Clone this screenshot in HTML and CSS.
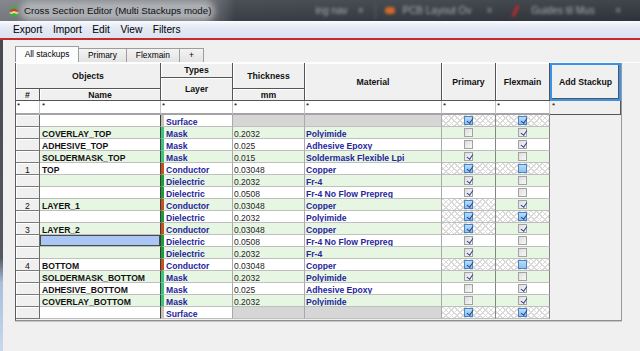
FILE: index.html
```html
<!doctype html>
<html lang="en">
<head>
<meta charset="utf-8">
<title>Cross Section Editor</title>
<link rel="stylesheet" href="styles.css">
</head>
<body>
<div class="titlebar">
  <svg class="app-icon" width="12" height="12" viewBox="0 0 12 12">
    <path d="M1 3 L6 1 L11 3 L6 5 Z" fill="#3cae3c"/>
    <path d="M1 5.5 L6 3.5 L11 5.5 L6 7.5 Z" fill="#d33a2c"/>
    <path d="M1 8 L6 6 L11 8 L6 10 Z" fill="#ecd9a0"/>
    <path d="M1 10 L6 8 L11 10 L6 12 Z" fill="#3cae3c"/>
  </svg>
  <span class="title">Cross Section Editor (Multi Stackups mode)</span>
  <div class="ghosts">
    <span class="ghost t1">ing nav</span>
    <span class="ghost x">×</span>
    <span class="ghost sep"></span>
    <span class="ghost dot"></span>
    <span class="ghost t2">PCB Layout Ov</span>
    <span class="ghost x">×</span>
    <span class="ghost slash"></span>
    <span class="ghost t3">Guides til Mus</span>
    <span class="ghost x">×</span>
  </div>
</div>

<div class="menubar">
  <span>Export</span>
  <span>Import</span>
  <span>Edit</span>
  <span>View</span>
  <span>Filters</span>
</div>

<div class="main">
  <div class="frame"></div>
  <div class="content">
    <div class="tabs">
      <span class="tab active">All stackups</span>
      <span class="tab">Primary</span>
      <span class="tab">Flexmain</span>
      <span class="tab plus">+</span>
    </div>
    <div class="panel">
      <div class="grid">
        <div class="head">
          <div class="h objects">Objects</div>
          <div class="h types">Types</div>
          <div class="h layer">Layer</div>
          <div class="h thick-h">Thickness</div>
          <div class="h mm">mm</div>
          <div class="h material">Material</div>
          <div class="h primary">Primary</div>
          <div class="h flexmain">Flexmain</div>
          <div class="h add">Add Stackup</div>
          <div class="h hash">#</div>
          <div class="h name-h">Name</div>
        </div>
        <div class="filter">
          <span>*</span><span>*</span><span>*</span><span>*</span><span>*</span><span>*</span><span>*</span><span class="addf">*</span>
        </div>

        <div class="row">
          <div class="c num"></div><div class="c name"></div><div class="c type surf">Surface</div>
          <div class="c thick grey"></div><div class="c mat grey"></div>
          <div class="c chk lock"><i class="cb blue on"></i></div><div class="c chk lock"><i class="cb blue on"></i></div>
        </div>
        <div class="row g">
          <div class="c num"></div><div class="c name">COVERLAY_TOP</div><div class="c type mask">Mask</div>
          <div class="c thick">0.2032</div><div class="c mat">Polyimide</div>
          <div class="c chk"><i class="cb"></i></div><div class="c chk"><i class="cb on"></i></div>
        </div>
        <div class="row">
          <div class="c num"></div><div class="c name">ADHESIVE_TOP</div><div class="c type mask">Mask</div>
          <div class="c thick">0.025</div><div class="c mat">Adhesive Epoxy</div>
          <div class="c chk"><i class="cb"></i></div><div class="c chk"><i class="cb on"></i></div>
        </div>
        <div class="row g">
          <div class="c num"></div><div class="c name">SOLDERMASK_TOP</div><div class="c type mask">Mask</div>
          <div class="c thick">0.015</div><div class="c mat">Soldermask Flexible Lpi</div>
          <div class="c chk"><i class="cb on"></i></div><div class="c chk"><i class="cb"></i></div>
        </div>
        <div class="row">
          <div class="c num">1</div><div class="c name">TOP</div><div class="c type cond">Conductor</div>
          <div class="c thick">0.03048</div><div class="c mat">Copper</div>
          <div class="c chk lock"><i class="cb blue on"></i></div><div class="c chk lock"><i class="cb blue"></i></div>
        </div>
        <div class="row g">
          <div class="c num"></div><div class="c name"></div><div class="c type diel">Dielectric</div>
          <div class="c thick">0.2032</div><div class="c mat">Fr-4</div>
          <div class="c chk"><i class="cb on"></i></div><div class="c chk"><i class="cb"></i></div>
        </div>
        <div class="row">
          <div class="c num"></div><div class="c name"></div><div class="c type diel">Dielectric</div>
          <div class="c thick">0.0508</div><div class="c mat">Fr-4 No Flow Prepreg</div>
          <div class="c chk"><i class="cb on"></i></div><div class="c chk"><i class="cb"></i></div>
        </div>
        <div class="row g">
          <div class="c num">2</div><div class="c name">LAYER_1</div><div class="c type cond">Conductor</div>
          <div class="c thick">0.03048</div><div class="c mat">Copper</div>
          <div class="c chk lock"><i class="cb blue on"></i></div><div class="c chk"><i class="cb on"></i></div>
        </div>
        <div class="row">
          <div class="c num"></div><div class="c name"></div><div class="c type diel">Dielectric</div>
          <div class="c thick">0.2032</div><div class="c mat">Polyimide</div>
          <div class="c chk lock"><i class="cb blue on"></i></div><div class="c chk lock"><i class="cb blue on"></i></div>
        </div>
        <div class="row g">
          <div class="c num">3</div><div class="c name">LAYER_2</div><div class="c type cond">Conductor</div>
          <div class="c thick">0.03048</div><div class="c mat">Copper</div>
          <div class="c chk lock"><i class="cb blue on"></i></div><div class="c chk"><i class="cb on"></i></div>
        </div>
        <div class="row">
          <div class="c num"></div><div class="c name sel"></div><div class="c type diel">Dielectric</div>
          <div class="c thick">0.0508</div><div class="c mat">Fr-4 No Flow Prepreg</div>
          <div class="c chk"><i class="cb on"></i></div><div class="c chk"><i class="cb"></i></div>
        </div>
        <div class="row g">
          <div class="c num"></div><div class="c name"></div><div class="c type diel">Dielectric</div>
          <div class="c thick">0.2032</div><div class="c mat">Fr-4</div>
          <div class="c chk"><i class="cb on"></i></div><div class="c chk"><i class="cb"></i></div>
        </div>
        <div class="row">
          <div class="c num">4</div><div class="c name">BOTTOM</div><div class="c type cond">Conductor</div>
          <div class="c thick">0.03048</div><div class="c mat">Copper</div>
          <div class="c chk lock"><i class="cb blue on"></i></div><div class="c chk lock"><i class="cb blue"></i></div>
        </div>
        <div class="row g">
          <div class="c num"></div><div class="c name">SOLDERMASK_BOTTOM</div><div class="c type mask">Mask</div>
          <div class="c thick">0.2032</div><div class="c mat">Polyimide</div>
          <div class="c chk"><i class="cb on"></i></div><div class="c chk"><i class="cb"></i></div>
        </div>
        <div class="row">
          <div class="c num"></div><div class="c name">ADHESIVE_BOTTOM</div><div class="c type mask">Mask</div>
          <div class="c thick">0.025</div><div class="c mat">Adhesive Epoxy</div>
          <div class="c chk"><i class="cb"></i></div><div class="c chk"><i class="cb on"></i></div>
        </div>
        <div class="row g">
          <div class="c num"></div><div class="c name">COVERLAY_BOTTOM</div><div class="c type mask">Mask</div>
          <div class="c thick">0.2032</div><div class="c mat">Polyimide</div>
          <div class="c chk"><i class="cb"></i></div><div class="c chk"><i class="cb on"></i></div>
        </div>
        <div class="row">
          <div class="c num"></div><div class="c name"></div><div class="c type surf">Surface</div>
          <div class="c thick grey"></div><div class="c mat grey"></div>
          <div class="c chk lock"><i class="cb blue on"></i></div><div class="c chk lock"><i class="cb blue on"></i></div>
        </div>
      </div>
    </div>
  </div>
</div>
</body>
</html>
```

FILE: styles.css
```css
* {
  box-sizing: border-box;
  margin: 0;
  padding: 0;
}
html, body { height: 100%; }
body {
  background: #f0f0f0;
  color: #000;
  font-family: "Liberation Sans", Arial, sans-serif;
  overflow: hidden;
  --cols: 24px 121px 72px 72px 137px 54px 54px 71px;
}

/* window title (aero glass) */
.titlebar {
  height: 21px;
  display: flex;
  align-items: center;
  overflow: hidden;
  white-space: nowrap;
  background:
    linear-gradient(rgba(255,255,255,.08), rgba(0,0,0,.05)),
    linear-gradient(to right, #7a7e84 0, #73777d 205px, #3c4148 235px, #30353c 100%);
}
.app-icon { margin-left: 8px; flex: none; }
.title {
  margin-left: 4px;
  font-size: 9.7px;
  line-height: 12px;
  color: #111;
  background: rgba(205,207,210,.6);
  box-shadow: 0 0 6px 4px rgba(205,207,210,.6);
  border-radius: 6px;
}
.ghosts { display: flex; align-items: center; margin-left: 104px; }
.ghost {
  color: #a6abb2;
  font-size: 10px;
  filter: blur(1.4px);
}
.ghost.x { margin-left: 10px; }
.ghost.sep { width: 1px; height: 16px; background: #5a5f66; margin-left: 12px; }
.ghost.dot { width: 10px; height: 7px; background: #d26a2a; border-radius: 3px; margin-left: 9px; }
.ghost.t2 { margin-left: 7px; width: 74px; }
.ghost.slash { width: 3px; height: 12px; background: #c02a2a; transform: rotate(25deg); margin-left: 22px; }
.ghost.t3 { margin-left: 14px; width: 74px; }

/* menu */
.menubar {
  height: 19px;
  display: flex;
  align-items: center;
  gap: 10.5px;
  padding-left: 13px;
  font-size: 10.2px;
  background: linear-gradient(#fbfcfe 0, #eef1f9 3px, #e4e9f5 7px, #dbe2f1 100%);
  border-bottom: 2px solid #c42a30;
}

.main { display: flex; height: calc(100% - 40px); }
.frame {
  width: 3px;
  flex: none;
  background: linear-gradient(#46494e 0, #55595f 70%, #a9bedb 78%, #c8d8ee 100%);
}
.content { flex: 1; padding: 6px 0 0 12px; }

/* tabs */
.tabs { display: flex; align-items: flex-end; height: 16px; }
.tab {
  height: 14px;
  padding: 0 9px;
  font-size: 8.4px;
  line-height: 13px;
  text-align: center;
  border: 1px solid #9b9d9f;
  border-bottom: none;
  border-left: none;
  background: linear-gradient(#f3f3f3, #e3e3e3);
}
.tab.active {
  height: 16px;
  width: 64px;
  padding: 0;
  line-height: 15px;
  border-left: 1px solid #8e8f8f;
  background: #fcfcfc;
}
.tab.plus { width: 24px; padding: 0; }
.panel { border-top: 1px solid #fdfdfd; }

/* grid */
.grid {
  width: 607px;
  height: 258px;
  background: #f0f0f0;
  border-left: 1px solid #5c5c5c;
  border-right: 1px solid #9a9a9a;
  border-bottom: 1px solid #8e8e8e;
  box-shadow: 0 1px #c8c8c8;
}
.head {
  display: grid;
  grid-template-columns: var(--cols);
  grid-template-rows: 15px 11px 12px;
}
.h {
  display: flex;
  align-items: center;
  justify-content: center;
  background: #f0f0f0;
  border-right: 1px solid #555;
  border-bottom: 1px solid #555;
  box-shadow: inset 1px 1px #fff;
  font-size: 8.7px;
  font-weight: bold;
  color: #111;
}
.objects { grid-column: 1 / 3; grid-row: 1 / 3; }
.types { grid-column: 3; grid-row: 1; }
.layer { grid-column: 3; grid-row: 2 / 4; }
.thick-h { grid-column: 4; grid-row: 1 / 3; }
.mm { grid-column: 4; grid-row: 3; }
.material { grid-column: 5; grid-row: 1 / 4; }
.primary { grid-column: 6; grid-row: 1 / 4; }
.flexmain { grid-column: 7; grid-row: 1 / 4; }
.add { grid-column: 8; grid-row: 1 / 4; border: 2px solid #3a93ea; box-shadow: inset -1px -1px #555; }
.hash { grid-column: 1; grid-row: 3; }
.name-h { grid-column: 2; grid-row: 3; }

.filter {
  display: grid;
  grid-template-columns: var(--cols);
  height: 14px;
}
.filter span {
  background: #fff;
  border-right: 1px solid #c2c2c2;
  border-bottom: 2px solid #a4a4a4;
  font-size: 8px;
  line-height: 9px;
  padding-left: 1px;
}
.filter span:nth-child(2) { padding-left: 2px; }
.filter .addf {
  background: #efefef;
  border-right: 1px solid #555;
  border-bottom: 1px solid #555;
  padding-left: 2px;
}

.row {
  display: grid;
  grid-template-columns: 24px 121px 72px 72px 137px 54px 54px;
  height: 12px;
}
.c {
  background-color: #fff;
  border-right: 1px solid #a9a9a9;
  border-bottom: 1px solid #bfbfbf;
  padding: 2px 0 0 1px;
  font-size: 8.6px;
  font-weight: bold;
  line-height: 10px;
  color: #25259a;
  white-space: nowrap;
  overflow: hidden;
}
.g .c { background-color: #e7f6e3; }
.row .num {
  background-color: #f0f0f0;
  border-right-color: #6b6b6b;
  border-bottom-color: #7a7a7a;
  box-shadow: inset 1px 1px #fff;
  text-align: center;
  font-weight: normal;
  color: #111;
  padding-left: 0;
}
.name { color: #111; padding-left: 2px; border-right-color: #3a3a3a; }
.row .sel { background-color: #a9c6f4; box-shadow: inset 0 0 0 1px #4a4a4a; }
.type { border-left: 3px solid #888; padding-left: 2px; }
.type.surf { border-left-color: #c6c2b4; }
.type.mask { border-left-color: #3cc47a; }
.type.cond { border-left-color: #c5521c; }
.type.diel { border-left-color: #1f9b3b; }
.thick { font-weight: normal; color: #1e1e1e; font-size: 8.5px; }
.row .grey { background-color: #d6d6d6; }
.chk {
  display: flex;
  justify-content: center;
  padding: 1px 0 0 0;
  border-right-color: #858585;
}
.row .lock {
  background-color: #fff;
  background-image:
    repeating-linear-gradient(45deg, #dadada 0 1px, transparent 1px 4px),
    repeating-linear-gradient(-45deg, #dadada 0 1px, transparent 1px 4px);
}

/* checkboxes */
.cb {
  display: block;
  position: relative;
  width: 9px;
  height: 9px;
  border: 1px solid #a2a2a2;
  background: linear-gradient(135deg, #dcdcdc, #f9f9f9);
}
.cb.blue {
  border-color: #4a86c6;
  background: linear-gradient(#b8dcf6, #8fc1ea);
}
.cb.on::after {
  content: "";
  position: absolute;
  left: 2.5px;
  top: 0;
  width: 2.5px;
  height: 5px;
  border: solid #2b3c92;
  border-width: 0 1.5px 1.5px 0;
  transform: rotate(35deg);
}
```
